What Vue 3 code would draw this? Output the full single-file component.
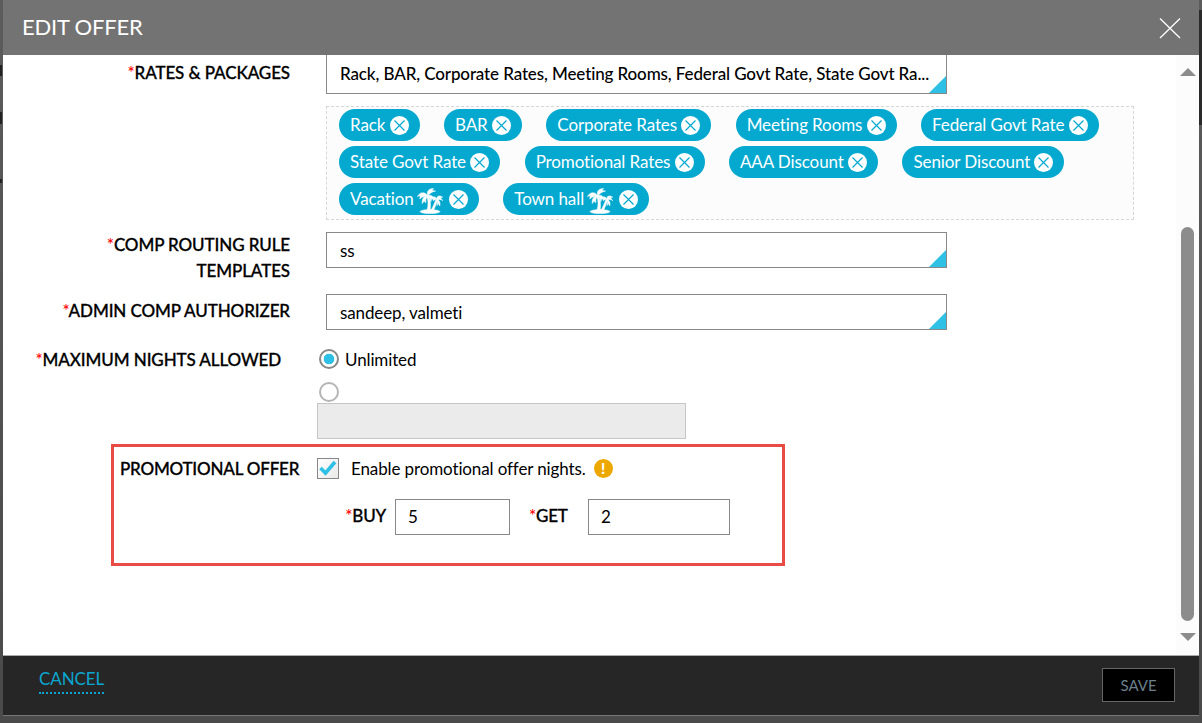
<template>
  <div class="page">
    <div class="modal">
      <header class="modal-head">
        <h1>EDIT OFFER</h1>
        <svg class="close" width="22" height="22" viewBox="0 0 22 22">
          <path d="M1 1.5 L21 21 M21 1.5 L1 21" stroke="#fff" stroke-width="1.3" fill="none" />
        </svg>
      </header>

      <div class="modal-body">
        <div class="form">
          <div class="row row-rates">
            <label class="lbl"><span class="req">*</span>RATES &amp; PACKAGES</label>
            <div class="select select-rates">
              Rack, BAR, Corporate Rates, Meeting Rooms, Federal Govt Rate, State Govt Ra...
            </div>
          </div>

          <div class="chips">
            <span v-for="chip in chips" :key="chip.name" class="chip">
              {{ chip.name }}
              <svg v-if="chip.palm" class="palm" width="26" height="26" viewBox="0 0 26 26">
                <g fill="#fff" stroke="#fff" stroke-width="0.5">
                  <ellipse cx="13" cy="23.6" rx="10" ry="2" />
                  <path d="M10 22.5 C11.5 17 11.4 12 9.6 8 L11.6 7.4 C13.6 12 13.8 17 13.2 22.5 Z" />
                  <path d="M14 22.5 C16 19 17.5 15 19 11.6 L20.6 12.2 C19.4 15.6 18 19.4 16.6 22.5 Z" />
                  <path d="M10.6 8 C8.6 3.6 3 3.4 0.4 8.6 L3.2 7.6 L2.8 11 C5 8.8 7.4 8 10.6 8 Z" />
                  <path d="M10.6 8 C9.4 2.8 12 0.6 16.6 0.4 L15 2.6 L18.6 3 C15.4 3.8 12.6 5.2 10.6 8 Z" />
                  <path d="M10.6 7.6 C7 7.8 4.8 11 5.2 15.6 L7.2 13 L8.8 15 C8.6 12.6 9 10 10.6 7.6 Z" />
                  <path d="M10.6 7.4 C14.2 6.4 17 8.4 17 12.4 L14.8 10.6 L13.8 13.8 C13.8 11.4 12.8 9.2 10.6 7.4 Z" />
                  <path d="M20 12 C19 8.2 22 6.6 25.8 9.2 L23.4 9.6 L25.8 12.8 C24 11.2 22 11 20 12 Z" />
                  <path d="M20 11.6 C18.8 8.6 16.8 8.2 15.2 9.4 L17.2 10 L16.4 12.4 C17.6 11.6 18.8 11.4 20 11.6 Z" />
                  <path d="M20 11.6 C22.6 12.2 23.6 15 22.8 18 L21.4 15.6 L20 17.6 C20.6 15.4 20.6 13.4 20 11.6 Z" />
                </g>
              </svg>
              <svg class="chip-x" width="19" height="19" viewBox="0 0 19 19">
                <circle cx="9.5" cy="9.5" r="9.5" fill="#fff" />
                <path d="M4.5 4.5 L14.5 14.5 M14.5 4.5 L4.5 14.5" stroke="#05a9d0" stroke-width="1.2" />
              </svg>
            </span>
          </div>

          <div class="row row-routing">
            <label class="lbl"><span class="req">*</span>COMP ROUTING RULE<br />TEMPLATES</label>
            <div class="select">ss</div>
          </div>

          <div class="row row-admin">
            <label class="lbl"><span class="req">*</span>ADMIN COMP AUTHORIZER</label>
            <div class="select">sandeep, valmeti</div>
          </div>

          <div class="row row-nights">
            <label class="lbl"><span class="req">*</span>MAXIMUM NIGHTS ALLOWED</label>
            <div class="nights">
              <div class="radio-line">
                <span class="radio on"></span>
                <span>Unlimited</span>
              </div>
              <span class="radio off"></span>
              <div class="disabled-input"></div>
            </div>
          </div>

          <section class="promo">
            <div class="promo-top">
              <label class="promo-lbl">PROMOTIONAL OFFER</label>
              <span class="check">
                <svg width="18" height="16" viewBox="0 0 18 16">
                  <path d="M1.5 8 L6.5 13 L16 2" stroke="#2fc0e6" stroke-width="3.6" fill="none" />
                </svg>
              </span>
              <span class="promo-text">Enable promotional offer nights.</span>
              <span class="warn">!</span>
            </div>
            <div class="promo-fields">
              <label class="lbl-small"><span class="req">*</span>BUY</label>
              <div class="num num-buy">5</div>
              <label class="lbl-small lbl-get"><span class="req">*</span>GET</label>
              <div class="num num-get">2</div>
            </div>
          </section>
        </div>

        <div class="scrollbar">
          <span class="arrow up"></span>
          <div class="thumb"></div>
          <span class="arrow down"></span>
        </div>
      </div>

      <footer class="modal-foot">
        <a class="cancel">CANCEL</a>
        <button class="save">SAVE</button>
      </footer>
    </div>
  </div>
</template>

<script setup>
const chips = [
  { name: "Rack" },
  { name: "BAR" },
  { name: "Corporate Rates" },
  { name: "Meeting Rooms" },
  { name: "Federal Govt Rate" },
  { name: "State Govt Rate" },
  { name: "Promotional Rates" },
  { name: "AAA Discount" },
  { name: "Senior Discount" },
  { name: "Vacation", palm: true },
  { name: "Town hall", palm: true },
];
</script>

<style>
html,
body {
  margin: 0;
  background: #555;
  overflow: hidden;
}
</style>

<style scoped>
.page {
  width: 1202px;
  height: 723px;
  padding: 0 3px;
  box-sizing: border-box;
  font-family: Lato, "Open Sans", sans-serif;
  color: #000;
  background:
    linear-gradient(#222, #222) 0 65px / 2px 11px no-repeat,
    linear-gradient(#222, #222) 0 112px / 2px 12px no-repeat,
    linear-gradient(#222, #222) 0 179px / 2px 4px no-repeat,
    linear-gradient(#2a2a2a, #2a2a2a) 1199px 10px / 3px 115px no-repeat,
    linear-gradient(#5c5c5c, #4a4a4a);
}

.modal {
  height: 716px;
  display: flex;
  flex-direction: column;
}

.modal-head {
  height: 55px;
  background: #737373;
  display: flex;
  align-items: center;
  justify-content: space-between;
  padding: 0 18px 0 19px;
  flex: none;
}

.modal-head h1 {
  margin: 0 0 3px;
  font-size: 22px;
  font-weight: 400;
  letter-spacing: -0.2px;
  color: #fff;
}

.modal-body {
  flex: 1;
  background: #fff;
  display: flex;
  min-height: 0;
}

.form {
  flex: 1;
  min-width: 0;
}

.row {
  display: flex;
}

.lbl {
  width: 287px;
  margin-right: 1px;
  text-align: right;
  font-size: 17px;
  font-weight: 500;
  letter-spacing: -0.1px;
  -webkit-text-stroke: 0.3px #000;
  line-height: 26px;
  flex: none;
}

.req {
  color: #f00;
  -webkit-text-stroke: 0;
}

.select {
  width: 621px;
  height: 36px;
  margin-left: 35px;
  box-sizing: border-box;
  border: 1px solid #888;
  padding: 0 13px;
  font-size: 17px;
  letter-spacing: -0.12px;
  line-height: 36px;
  white-space: nowrap;
  position: relative;
}

.select::after {
  content: "";
  position: absolute;
  right: 0;
  bottom: 0;
  border-style: solid;
  border-width: 0 0 17px 17px;
  border-color: transparent transparent #2fc0e6 transparent;
}

.select-rates {
  height: 39px;
  border-top: 0;
  line-height: 38px;
  font-weight: 500;
}

.row-rates .lbl {
  padding-top: 5px;
}

.chips {
  margin: 12px 0 0 323px;
  width: 808px;
  height: 114px;
  box-sizing: border-box;
  border: 1px dashed #d6d6d6;
  background: #fcfcfc;
  padding: 2px 12px 0;
  display: flex;
  flex-wrap: wrap;
  align-content: flex-start;
  column-gap: 24.4px;
  row-gap: 5px;
}

.chip {
  height: 32px;
  border-radius: 16px;
  background: #05a9d0;
  color: #fff;
  font-size: 17px;
  letter-spacing: -0.1px;
  line-height: 32px;
  padding: 0 11px;
  display: flex;
  align-items: center;
  white-space: pre;
}

.chip-x {
  flex: none;
}

.palm {
  margin: 4px 6px 0 -1px;
  flex: none;
}

.row-routing {
  margin-top: 12px;
}

.row-admin {
  margin-top: 10px;
}

.row-admin .lbl {
  line-height: 34px;
}

.row-nights {
  margin-top: 15px;
}

.row-nights .lbl {
  width: 278px;
  margin-right: 10px;
  padding-top: 2px;
}

.nights {
  margin-left: 26px;
  font-size: 17px;
  letter-spacing: -0.12px;
}

.radio-line {
  display: flex;
  align-items: center;
  gap: 6px;
  height: 28px;
  padding-left: 2px;
}

.radio {
  display: block;
  width: 20px;
  height: 20px;
  box-sizing: border-box;
  border-radius: 50%;
}

.radio.on {
  border: 2px solid #888;
  background: radial-gradient(circle, #2fc0e6 0 5px, #fff 5.6px);
}

.radio.off {
  border: 2px solid #b5b5b5;
  margin: 9px 0 0 2px;
}

.disabled-input {
  width: 369px;
  height: 36px;
  margin-top: 1px;
  box-sizing: border-box;
  background: #ebebeb;
  border: 1px solid #c6c6c6;
}

.promo {
  margin: 5px 0 0 108px;
  width: 674px;
  height: 122px;
  box-sizing: border-box;
  border: 3px solid #e84c45;
}

.promo-top {
  display: flex;
  align-items: center;
  height: 22px;
  margin-top: 10px;
}

.promo-lbl {
  width: 180px;
  margin-left: 6px;
  font-size: 17px;
  font-weight: 500;
  letter-spacing: -0.2px;
  -webkit-text-stroke: 0.3px #000;
  white-space: nowrap;
}

.check {
  width: 22px;
  height: 21px;
  margin-left: 17px;
  box-sizing: border-box;
  border: 1px solid #888;
  background: linear-gradient(135deg, #fff, #e9e9e9);
  display: flex;
  align-items: center;
  justify-content: center;
}

.promo-text {
  margin-left: 12px;
  font-size: 17px;
  letter-spacing: -0.12px;
}

.warn {
  margin-left: 8px;
  width: 19px;
  height: 19px;
  border-radius: 50%;
  background: #eda800;
  color: #fff;
  font-size: 15px;
  font-weight: 900;
  line-height: 19px;
  text-align: center;
}

.promo-fields {
  display: flex;
  align-items: center;
  margin-top: 20px;
}

.lbl-small {
  font-size: 17px;
  font-weight: 500;
  letter-spacing: -0.2px;
  -webkit-text-stroke: 0.3px #000;
  width: 272px;
  padding-bottom: 4px;
  text-align: right;
  flex: none;
}

.lbl-get {
  width: 39px;
  margin-left: 19px;
  text-align: left;
}

.num {
  height: 36px;
  box-sizing: border-box;
  border: 1px solid #888;
  font-size: 17px;
  line-height: 34px;
  padding-left: 12px;
}

.num-buy {
  width: 115px;
  margin-left: 9px;
}

.num-get {
  width: 142px;
  margin-left: 20px;
}

.scrollbar {
  width: 23px;
  flex: none;
  background: #fcfcfc;
  display: flex;
  flex-direction: column;
  align-items: center;
}

.arrow {
  width: 0;
  height: 0;
  border-left: 8px solid transparent;
  border-right: 8px solid transparent;
}

.arrow.up {
  margin-top: 13px;
  border-bottom: 8px solid #8c8c8c;
}

.arrow.down {
  margin-top: 12px;
  border-top: 8px solid #8c8c8c;
}

.thumb {
  width: 13px;
  height: 394px;
  margin-top: 151px;
  border-radius: 7px;
  background: #8c8c8c;
}

.modal-foot {
  height: 61px;
  flex: none;
  box-sizing: border-box;
  background: #262626;
  border-top: 1px solid #aaa;
  border-bottom: 1px solid #777;
  display: flex;
  align-items: center;
  justify-content: space-between;
  padding: 0 24px 0 36px;
}

.cancel {
  color: #0ba6d0;
  font-size: 17px;
  letter-spacing: -0.1px;
  line-height: 20px;
  border-bottom: 2px dotted #0ba6d0;
  padding-bottom: 3px;
  margin-bottom: 8px;
}

.save {
  width: 73px;
  height: 34px;
  margin-bottom: 2px;
  background: #000;
  border: 1px solid #666;
  color: #6b7f8c;
  font-family: inherit;
  font-size: 15px;
  padding: 0;
}
</style>
